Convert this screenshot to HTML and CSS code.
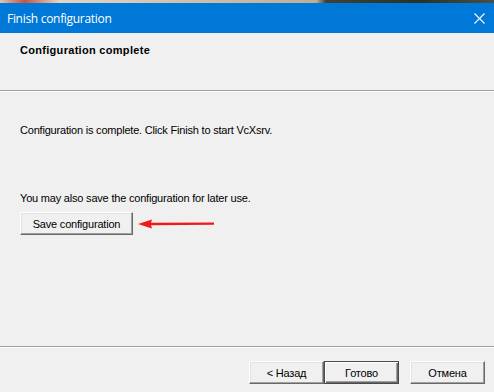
FILE: index.html
```html
<!DOCTYPE html>
<html lang="en">
<head>
    <meta charset="UTF-8">
    <title>Finish configuration</title>
    <link rel="stylesheet" href="styles.css">
</head>
<body>
    <div class="desktop-strip"></div>
    <div class="dialog">
        <div class="title-bar">
            <span class="title">Finish configuration</span>
            <svg class="close" width="11" height="11" viewBox="0 0 11 11">
                <path d="M0.5 0.5 L10.5 10.5 M10.5 0.5 L0.5 10.5" stroke="#fff" stroke-width="1.1" fill="none"/>
            </svg>
        </div>
        <div class="header">
            <h1>Configuration complete</h1>
        </div>
        <div class="content">
            <p class="message">Configuration is complete. Click Finish to start VcXsrv.</p>
            <p class="save-note">You may also save the configuration for later use.</p>
            <div class="save-row">
                <button class="btn save-btn">Save configuration</button>
                <svg class="arrow" width="78" height="12" viewBox="0 0 78 12">
                    <path d="M0 6 L14 1.5 L13 4.8 L76 4.6 L76 6.8 L13 7.2 L14 10.5 Z" fill="#f01818"/>
                </svg>
            </div>
        </div>
        <div class="footer">
            <div class="buttons">
                <button class="btn">&lt; Назад</button>
                <button class="btn default">Готово</button>
                <button class="btn cancel">Отмена</button>
            </div>
        </div>
    </div>
</body>
</html>
```

FILE: styles.css
```css
* {
    box-sizing: border-box;
    margin: 0;
    padding: 0;
}

body {
    width: 494px;
    height: 392px;
    overflow: hidden;
    background: #f0f0f0;
    font-family: 'Liberation Sans', Arial, sans-serif;
    font-size: 11px;
    letter-spacing: -0.2px;
    color: #000;
}

.desktop-strip {
    height: 3px;
    background: linear-gradient(90deg, #d8c9b4 0%, #c9533f 5%, #e2d6c4 12%, #cdbfa8 40%, #bfae92 64%, #3e4236 66%, #2b3127 85%, #4a4e44 100%);
}

.dialog {
    display: flex;
    flex-direction: column;
    height: 389px;
}

.title-bar {
    height: 30px;
    background: #0078d7;
    color: #fff;
    display: flex;
    align-items: center;
    justify-content: space-between;
    padding: 0 9px 0 7px;
}

.title {
    font-family: 'Open Sans', 'Noto Sans', sans-serif;
    font-size: 12px;
    letter-spacing: -0.3px;
}

.close {
    margin-top: 1px;
}

.header {
    height: 58px;
    padding: 11px 0 0 20px;
    border-bottom: 1px solid #a0a0a0;
    box-shadow: 0 1px 0 #fff;
}

.header h1 {
    font-size: 11px;
    font-weight: bold;
    line-height: 13px;
    letter-spacing: 0.3px;
}

.content {
    flex: 1;
    padding: 33px 0 0 20px;
}

.message,
.save-note {
    line-height: 13px;
}

.save-note {
    margin-top: 55px;
}

.save-row {
    display: flex;
    align-items: center;
    gap: 5px;
    margin-top: 7px;
}

.arrow {
    margin-top: 1px;
}

.btn {
    height: 23px;
    width: 75px;
    font-family: 'Liberation Sans', Arial, sans-serif;
    font-size: 11px;
    letter-spacing: -0.2px;
    color: #000;
    background: #f0f0f0;
    border-top: 1px solid #fff;
    border-left: 1px solid #fff;
    border-right: 1px solid #696969;
    border-bottom: 1px solid #696969;
    box-shadow: inset -1px -1px 0 #a0a0a0, inset 1px 1px 0 #e3e3e3;
}

.save-btn {
    width: 113px;
}

.footer {
    height: 46px;
    border-top: 1px solid #a0a0a0;
    box-shadow: inset 0 1px 0 #fff;
    padding: 14px 9px 0 0;
}

.buttons {
    display: flex;
    justify-content: flex-end;
}

.btn.default {
    border: 1px solid #4a4a4a;
    box-shadow: inset 1px 1px 0 #fff, inset -1px -1px 0 #696969, inset -2px -2px 0 #a0a0a0;
}

.btn.cancel {
    margin-left: 11px;
}
```
